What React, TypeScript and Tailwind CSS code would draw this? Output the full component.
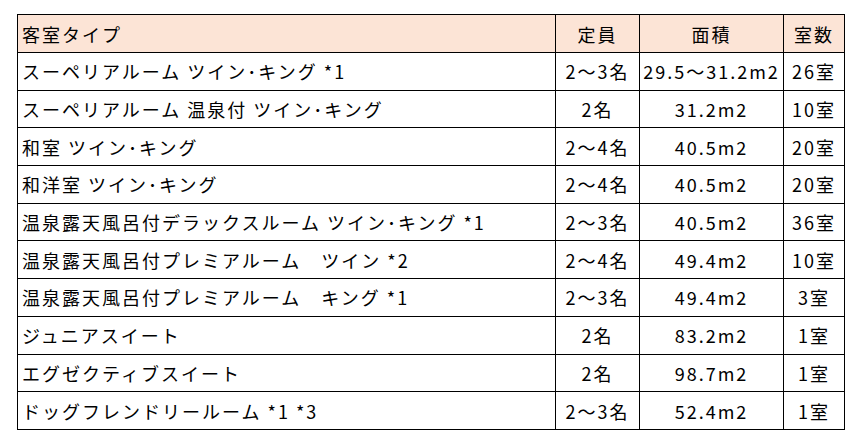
const rows = [
  ["スーペリアルーム ツイン･キング *1", "2～3名", "29.5～31.2m2", "26室"],
  ["スーペリアルーム 温泉付 ツイン･キング", "2名", "31.2m2", "10室"],
  ["和室 ツイン･キング", "2～4名", "40.5m2", "20室"],
  ["和洋室 ツイン･キング", "2～4名", "40.5m2", "20室"],
  ["温泉露天風呂付デラックスルーム ツイン･キング *1", "2～3名", "40.5m2", "36室"],
  ["温泉露天風呂付プレミアルーム　ツイン *2", "2～4名", "49.4m2", "10室"],
  ["温泉露天風呂付プレミアルーム　キング *1", "2～3名", "49.4m2", "3室"],
  ["ジュニアスイート", "2名", "83.2m2", "1室"],
  ["エグゼクティブスイート", "2名", "98.7m2", "1室"],
  ["ドッグフレンドリールーム *1 *3", "2～3名", "52.4m2", "1室"],
];

export default function App() {
  return (
    <div className="w-[855px] h-[442px] bg-white pt-[14px] pl-[17px] font-['Noto_Sans_CJK_JP','Noto_Sans',sans-serif] text-[18px] text-black">
      <table className="border-collapse table-fixed w-[827px] tracking-[2px]">
        <colgroup>
          <col className="w-[538px]" />
          <col className="w-[84px]" />
          <col className="w-[144px]" />
          <col className="w-[61px]" />
        </colgroup>
        <thead>
          <tr className="bg-[#fce4d6] h-[38px]">
            <th className="border border-black px-[4px] text-left font-normal leading-none">客室タイプ</th>
            <th className="border border-black font-normal leading-none">定員</th>
            <th className="border border-black font-normal leading-none">面積</th>
            <th className="border border-black font-normal leading-none">室数</th>
          </tr>
        </thead>
        <tbody>
          {rows.map((r, i) => (
            <tr key={i} className="h-[37.7px]">
              <td className="border border-black px-[4px] leading-none whitespace-nowrap">{r[0]}</td>
              <td className="border border-black text-center leading-none">{r[1]}</td>
              <td className="border border-black text-center leading-none">{r[2]}</td>
              <td className="border border-black text-center leading-none">{r[3]}</td>
            </tr>
          ))}
        </tbody>
      </table>
    </div>
  );
}
